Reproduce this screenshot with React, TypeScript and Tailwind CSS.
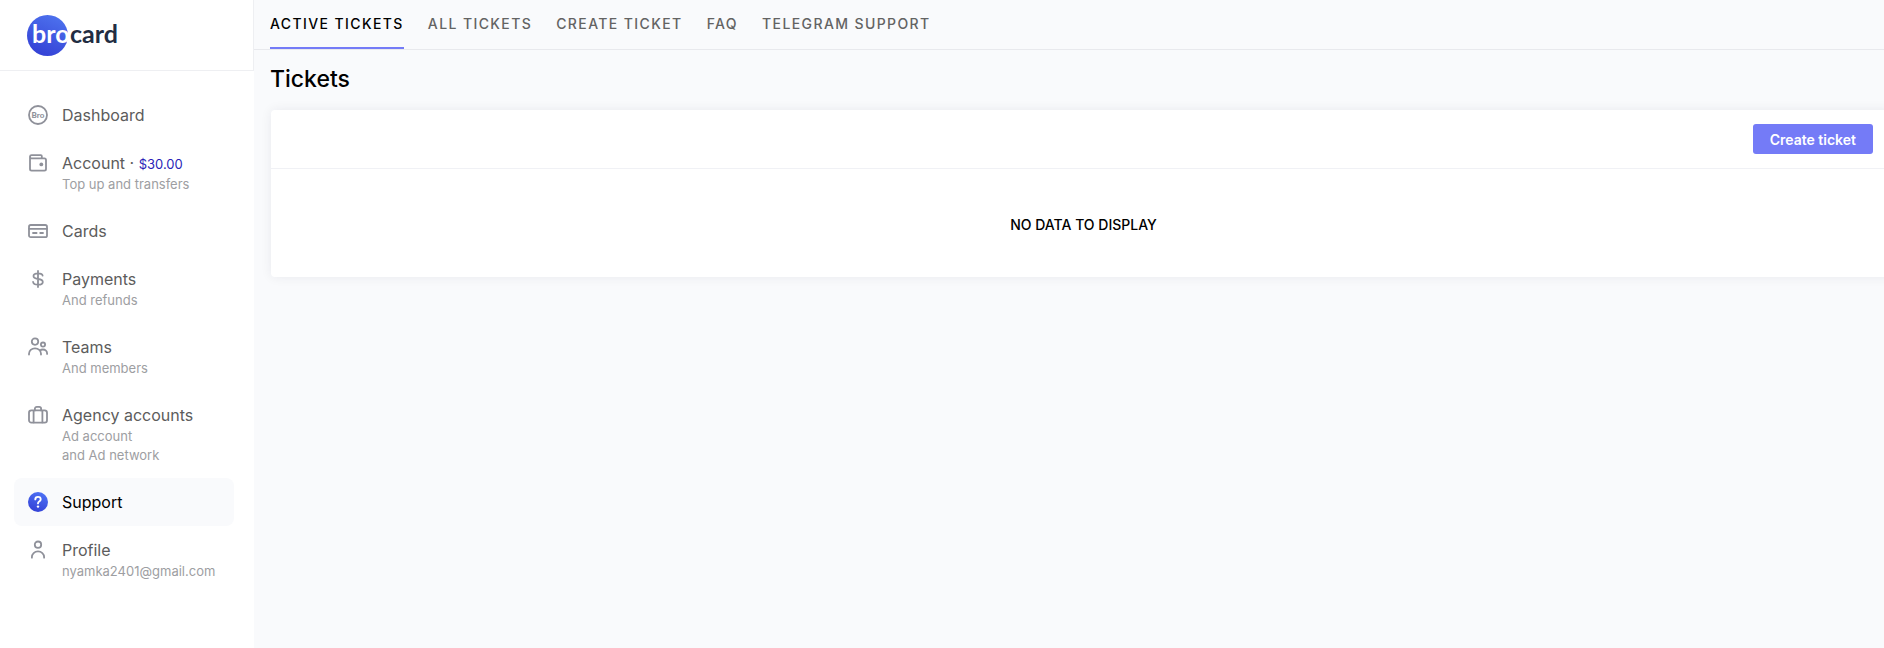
import React from 'react';
import clsx from 'clsx';

type NavItem = {
  title: string;
  balance?: string;
  hint?: string[];
  icon: React.ReactNode;
  active?: boolean;
};

function Icon({ children }: { children: React.ReactNode }) {
  return (
    <svg
      viewBox="0 0 20 20"
      className="h-5 w-5 text-[#8f919a]"
      fill="none"
      stroke="currentColor"
      strokeWidth="1.8"
      strokeLinecap="round"
      strokeLinejoin="round"
      aria-hidden="true"
    >
      {children}
    </svg>
  );
}

const navItems: NavItem[] = [
  {
    title: 'Dashboard',
    icon: (
      <Icon>
        <circle cx="10" cy="10" r="9" />
        <text x="10" y="12.8" textAnchor="middle" fontSize="8" fontWeight="900" fill="currentColor" stroke="none" className="font-['Lato',sans-serif]">
          Bro
        </text>
      </Icon>
    ),
  },
  {
    title: 'Account',
    balance: '$30.00',
    hint: ['Top up and transfers'],
    icon: (
      <Icon>
        <path d="M2 3.6v12.5a1.6 1.6 0 0 0 1.6 1.6h12.8a1.6 1.6 0 0 0 1.6-1.6V6.9a1.6 1.6 0 0 0-1.6-1.6H3.6A1.6 1.6 0 0 1 2 3.6a1.6 1.6 0 0 1 1.6-1.5h9.2a1 1 0 0 1 1 1v2.2" />
        <circle cx="13.3" cy="11.4" r="1.9" fill="currentColor" stroke="none" />
      </Icon>
    ),
  },
  {
    title: 'Cards',
    icon: (
      <Icon>
        <rect x="1" y="4" width="18" height="12.2" rx="1.8" />
        <path d="M1 7.8h18M5 12h3.6M12.200 12H15" />
      </Icon>
    ),
  },
  {
    title: 'Payments',
    hint: ['And refunds'],
    icon: (
      <Icon>
        <path d="M10 2v16M14.6 6.6C14.4 5 12.9 4.3 10 4.3c-2.8 0-4.5 1-4.5 2.8 0 1.9 1.7 2.5 4.5 2.9 3 .4 4.8 1.1 4.8 2.9 0 1.9-1.9 2.8-4.8 2.8-3 0-4.7-.9-4.9-2.7" />
      </Icon>
    ),
  },
  {
    title: 'Teams',
    hint: ['And members'],
    icon: (
      <Icon>
        <circle cx="7" cy="4.6" r="3.2" />
        <circle cx="15" cy="7.6" r="2.1" />
        <path d="M1 17.6v-.9c0-3 2.6-5.4 6-5.4s6 2.4 6 5.4v.9M11.9 13.7c.8-.8 1.8-1.2 3-1.2 2.4 0 4.2 1.7 4.2 4v.4" />
      </Icon>
    ),
  },
  {
    title: 'Agency accounts',
    hint: ['Ad account', 'and Ad network'],
    icon: (
      <Icon>
        <rect x="1" y="5.4" width="18" height="12.2" rx="2.4" />
        <path d="M6.9 5.4V3.8a1.9 1.9 0 0 1 1.9-1.9h2.4a1.9 1.9 0 0 1 1.9 1.9v1.6M5.6 5.8v11.6M14.4 5.8v11.6" />
      </Icon>
    ),
  },
  {
    title: 'Support',
    active: true,
    icon: (
      <svg viewBox="0 0 20 20" className="h-5 w-5" fill="none" aria-hidden="true">
        <defs>
          <linearGradient id="supportFill" x1="14" y1="0" x2="6" y2="20" gradientUnits="userSpaceOnUse">
            <stop stopColor="#4d72f5" />
            <stop offset="1" stopColor="#3340d6" />
          </linearGradient>
        </defs>
        <circle cx="10" cy="10" r="10" fill="url(#supportFill)" />
        <path d="M7.3 7.4c0-1.500 1.100-2.500 2.700-2.500s2.700 1 2.700 2.400c0 1.200-.7 1.700-1.500 2.200-.8.500-1.200.9-1.200 1.900" stroke="#fff" strokeWidth="1.9" strokeLinecap="round" />
        <circle cx="10" cy="14.6" r="1.2" fill="#fff" />
      </svg>
    ),
  },
  {
    title: 'Profile',
    hint: ['nyamka2401@gmail.com'],
    icon: (
      <Icon>
        <circle cx="10" cy="4.7" r="3.2" />
        <path d="M3.9 17.7v-.6c0-3.2 2.6-5.7 6.1-5.7s6.1 2.5 6.1 5.7v.6" />
      </Icon>
    ),
  },
];

const tabs = ['Active tickets', 'All tickets', 'Create ticket', 'FAQ', 'Telegram support'];

function Logo() {
  return (
    <svg width="96" height="42" viewBox="0 0 96 42" role="img" aria-label="brocard">
      <defs>
        <linearGradient id="logoFill" x1="30" y1="0" x2="12" y2="42" gradientUnits="userSpaceOnUse">
          <stop stopColor="#4d72ee" />
          <stop offset="1" stopColor="#333fd4" />
        </linearGradient>
      </defs>
      <circle cx="20.5" cy="20.5" r="20.5" fill="url(#logoFill)" />
      <g className="font-['Lato',sans-serif]" fontSize="25" fontWeight="700">
        <text x="5" y="28" fill="#fff">bro</text>
        <text x="43" y="28" fill="#222d42">card</text>
      </g>
    </svg>
  );
}

function Sidebar() {
  return (
    <aside className="w-[254px] shrink-0 bg-white">
      <div className="flex h-[71px] border-r border-b border-[#eeeff2] pt-[15px] pl-[27px]">
        <a href="#">
          <Logo />
        </a>
      </div>

      <nav className="pt-5 pr-5 pl-3.5">
        {navItems.map((item) => (
          <a
            key={item.title}
            href="#"
            className={clsx('flex gap-3.5 rounded-lg px-3.5 py-3', item.active && 'bg-[#f9fafc]')}
          >
            <span className="flex h-6 items-center">{item.icon}</span>
            <span>
              <span className={clsx('block text-base', item.active ? 'text-black' : 'text-[#5c5c5c]')}>
                {item.title}
                {item.balance && (
                  <>
                    {' · '}
                    <span className="text-[13px] text-[#2a1fb8]">{item.balance}</span>
                  </>
                )}
              </span>
              {item.hint && (
                <span className="mb-px block text-[13px] leading-[19px] text-[#9d9ea2]">
                  {item.hint.map((line) => (
                    <span key={line} className="block">{line}</span>
                  ))}
                </span>
              )}
            </span>
          </a>
        ))}
      </nav>
    </aside>
  );
}

export default function App() {
  return (
    <div className="flex min-h-screen overflow-hidden bg-[#f9fafc] font-['Inter',sans-serif]">
      <Sidebar />

      <main className="min-w-0 flex-1">
        <nav className="flex h-[50px] gap-6 border-b border-[#e8e9ed] pl-4">
          {tabs.map((tab, i) => (
            <a
              key={tab}
              href="#"
              className={clsx(
                'border-b-2 pt-3.5 text-sm font-medium tracking-widest uppercase',
                i === 0 ? 'border-[#747bf7] text-black' : 'border-transparent text-[#636363]'
              )}
            >
              {tab}
            </a>
          ))}
        </nav>

        <h1 className="pt-[13px] pl-4 text-[23px] leading-8 font-medium text-black">Tickets</h1>

        {/* the card runs past the right edge of the window */}
        <section className="mt-[15px] -mr-3 ml-[17px] rounded-sm bg-white shadow-[0_0_12px_rgba(30,35,60,0.07)]">
          <div className="flex justify-end border-b border-[#f0f1f5] py-3.5 pr-[23px]">
            <button type="button" className="h-[30px] rounded-[3px] bg-[#747bf7] px-[17px] pt-px text-sm font-semibold text-white">
              Create ticket
            </button>
          </div>
          <p className="pt-[46px] pb-[42px] text-center text-sm font-medium text-black uppercase">No data to display</p>
        </section>
      </main>
    </div>
  );
}
